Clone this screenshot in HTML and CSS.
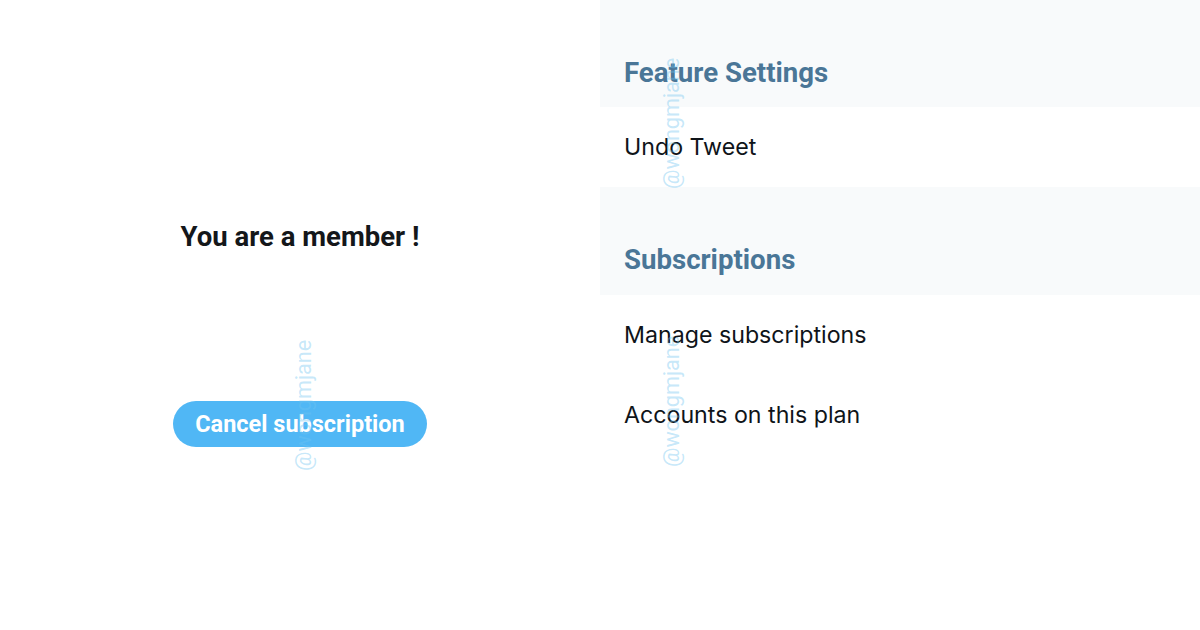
FILE: index.html
```html
<!DOCTYPE html>
<html>
<head>
<meta charset="utf-8">
<link rel="stylesheet" href="styles.css">
</head>
<body>
<div class="page">
  <section class="left">
    <h1 class="member">You are a member !</h1>
    <button class="cancel">Cancel subscription</button>
    <span class="wm wm-left">@wongmjane</span>
  </section>
  <section class="right">
    <div class="head"><h2>Feature Settings</h2></div>
    <div class="row">Undo Tweet</div>
    <div class="head"><h2>Subscriptions</h2></div>
    <div class="row">Manage subscriptions</div>
    <div class="row">Accounts on this plan</div>
    <span class="wm wm-r1">@wongmjane</span>
    <span class="wm wm-r2">@wongmjane</span>
  </section>
</div>
</body>
</html>
```

FILE: styles.css
```css
html, body {
  margin: 0;
  padding: 0;
  background: #fff;
}
.page {
  width: 1200px;
  height: 630px;
  display: flex;
  overflow: hidden;
}
.left {
  position: relative;
  width: 600px;
  display: flex;
  flex-direction: column;
  align-items: center;
}
.member {
  margin: 220px 0 0;
  font-family: Roboto, sans-serif;
  font-weight: 700;
  font-size: 27.5px;
  line-height: 34px;
  color: #14171a;
}
.cancel {
  margin-top: 147px;
  width: 254px;
  height: 46px;
  border: none;
  border-radius: 23px;
  background: #50b7f5;
  color: #fff;
  font-family: Roboto, sans-serif;
  font-weight: 700;
  font-size: 23.5px;
  padding: 0;
}
.right {
  position: relative;
  width: 600px;
  display: flex;
  flex-direction: column;
}
.head {
  height: 107px;
  background: #f8fafb;
  display: flex;
  align-items: flex-end;
  padding: 0 24px 18px;
  box-sizing: border-box;
}
.head + .row + .head {
  height: 108px;
  padding-bottom: 19px;
}
.head h2 {
  margin: 0;
  font-family: Roboto, sans-serif;
  font-weight: 700;
  font-size: 27.6px;
  line-height: 32px;
  color: #4a7697;
}
.row {
  height: 79px;
  display: flex;
  align-items: center;
  padding: 0 24px;
  font-family: Inter, sans-serif;
  font-size: 23.2px;
  color: #0f1419;
}
.head + .row {
  height: 80px;
}
.wm {
  position: absolute;
  font-family: Roboto, sans-serif;
  font-size: 21.6px;
  color: rgba(110, 195, 240, 0.4);
  transform: rotate(-90deg);
  transform-origin: left top;
  white-space: nowrap;
  line-height: 21px;
}
.wm-left { left: 293px; top: 471px; }
.wm-r1 { left: 61px; top: 189px; }
.wm-r2 { left: 61px; top: 467px; }
```
